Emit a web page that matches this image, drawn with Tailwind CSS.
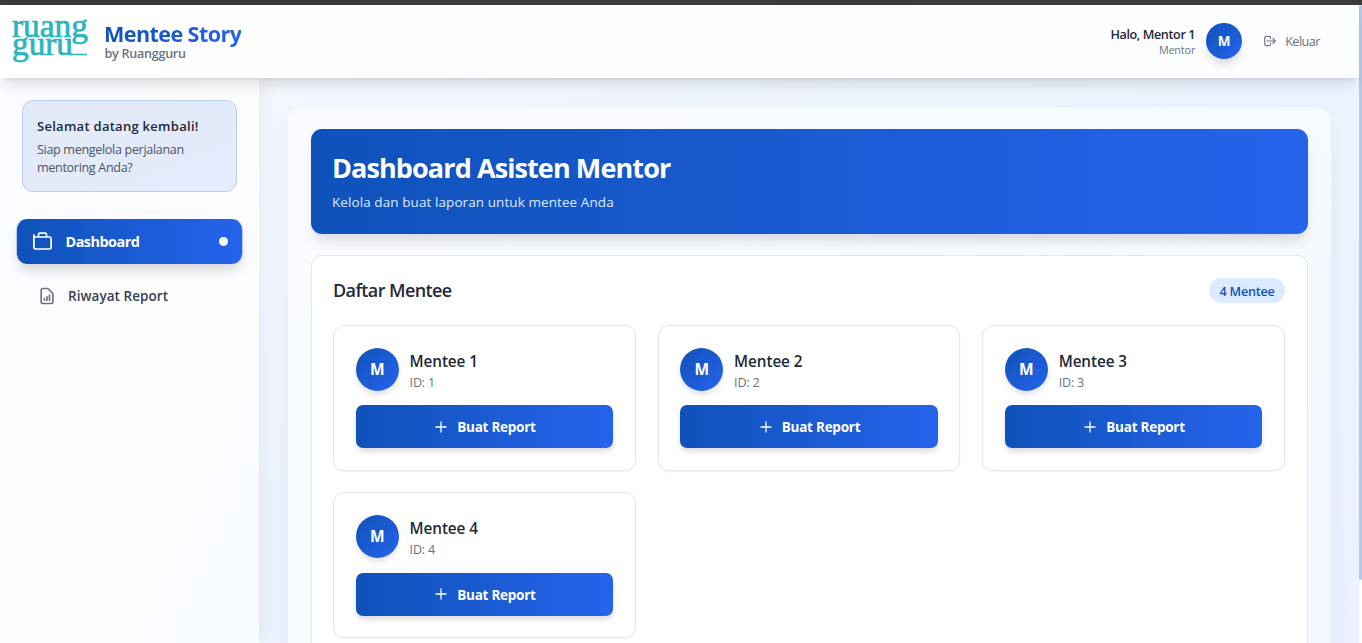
<!DOCTYPE html>
<html lang="id">
<head>
<meta charset="utf-8">
<title>Mentee Story</title>
<script src="https://cdn.jsdelivr.net/npm/@tailwindcss/browser@4"></script>
</head>
<body class="h-[643px] w-[1362px] overflow-hidden bg-white font-['Open_Sans','Noto_Sans',sans-serif] text-[#1f2937] whitespace-nowrap">
<div class="flex h-[643px] flex-col overflow-hidden">
  <div class="h-[5px] shrink-0 bg-[#3b3b3b]"></div>
  <div class="flex h-[638px]">
    <div class="flex w-[1359px] flex-col bg-linear-to-br from-[#f8fafc] via-[#edf4ff] to-[#edf1ff]">
      <header class="relative z-10 flex h-[73px] shrink-0 items-center justify-between bg-linear-to-r from-white to-[#fcfdff] pr-[39px] pl-[10px] shadow-[0_9px_14px_-3px_rgba(0,0,0,0.13),0_3px_5px_-4px_rgba(0,0,0,0.15)]">
        <div class="flex items-center">
          <svg class="h-[60px] w-[80px] overflow-visible" viewBox="0 0 80 60" font-family="Liberation Serif" font-size="33" fill="#2ab5bd" stroke="#2ab5bd" stroke-width=".7">
            <text x="2" y="24.700" textLength="76" lengthAdjust="spacingAndGlyphs">ruang</text>
            <text x="2" y="42.500" textLength="61" lengthAdjust="spacingAndGlyphs">guru</text>
            <path d="M61 42.500H77" stroke-width="1.500"/>
          </svg>
          <div class="mb-px ml-[15px] flex flex-col">
            <span class="-ml-[1px] self-start bg-linear-to-r from-[#0f52ba] to-[#2563eb] bg-clip-text pb-[3px] text-[21.6px] leading-[25px] font-bold tracking-[-0.6px] text-transparent">Mentee Story</span>
            <span class="-mt-[2px] -ml-[0.500px] text-[12.6px] leading-[14px] font-semibold tracking-[-0.28px] text-[#6b7280]">by Ruangguru</span>
          </div>
        </div>
        <div class="flex items-center pb-px">
          <div class="flex flex-col items-end">
            <span class="pt-[2px] text-[12.6px] leading-[16px] font-semibold tracking-[-0.38px]">Halo, Mentor 1</span>
            <span class="-mt-px text-[10.8px] leading-[15px] tracking-[-0.15px] text-[#6b7280]">Mentor</span>
          </div>
          <div class="ml-[11px] flex size-9 items-center justify-center rounded-full bg-linear-to-br from-[#0f52ba] to-[#2563eb] text-[13.500px] font-bold text-white shadow-[0_7px_10px_-2px_rgba(0,0,0,0.15)]">M</div>
          <svg class="ml-[21px] size-[14px]" viewBox="0 0 24 24" fill="none" stroke="#6b7280" stroke-width="2" stroke-linecap="round" stroke-linejoin="round"><path d="M17 16l4-4m0 0l-4-4m4 4H7m6 4v1a3 3 0 01-3 3H6a3 3 0 01-3-3V7a3 3 0 013-3h4a3 3 0 013 3v1"/></svg>
          <span class="ml-[8px] pt-[2px] text-[12.6px] tracking-[-0.5px] text-[#6b7280]">Keluar</span>
        </div>
      </header>
      <div class="flex min-h-0 flex-1">
        <aside class="flex w-[259px] shrink-0 flex-col bg-linear-to-br from-[#fafcff] via-[#fdfdff] to-[#f8fcff] pt-[22px] shadow-[4px_0_18px_rgba(30,50,90,0.06)]">
          <div class="ml-[22px] flex h-[92px] w-[215px] flex-col rounded-[11px] border border-[#b7cbee] bg-linear-to-br from-[#e2e9f6] to-[#e4edfe] px-[14px] pt-[15px]">
            <span class="text-[13px] leading-[20px] font-semibold tracking-[0.28px]">Selamat datang kembali!</span>
            <span class="mt-[5px] text-[12.6px] leading-[18px] tracking-[-0.34px] text-[#4b5563]">Siap mengelola perjalanan<br>mentoring Anda?</span>
          </div>
          <div class="mt-[27px] ml-[16px] flex h-[45px] w-[227px] items-center rounded-[11px] border-x border-[#b7cbee] bg-linear-to-r from-[#0f52ba] to-[#2563eb] bg-origin-border pr-[14px] pl-[15px] shadow-[0_9px_13px_-3px_rgba(0,0,0,0.16)]">
            <svg class="h-[19px] w-[21px]" viewBox="0 0 21 19" fill="none" stroke="white" stroke-width="1.700" stroke-linejoin="round" stroke-linecap="round"><path d="M1.900 2.900V15.500a1.500 1.500 0 001.500 1.500H17.600a1.500 1.500 0 001.500-1.500V6.500a1.500 1.500 0 00-1.500-1.500H3.400a1.500 1.500 0 01-1.500-1.500M6.500 4.800V2.600a1.500 1.500 0 011.500-1.500h5a1.500 1.500 0 011.500 1.500V4.800"/></svg>
            <span class="ml-[12.500px] text-[14.4px] font-bold tracking-[-0.5px] text-white">Dashboard</span>
            <span class="ml-auto size-[9px] rounded-full bg-white"></span>
          </div>
          <div class="mt-[10px] ml-[37px] flex h-[44px] items-center">
            <svg class="size-[20px]" viewBox="0 0 24 24" fill="none" stroke="#6b7280" stroke-width="2" stroke-linecap="round" stroke-linejoin="round"><path d="M9 17v-2m3 2v-4m3 4v-6m2 10H7a2 2 0 01-2-2V5a2 2 0 012-2h5.586a1 1 0 01.707.293l5.414 5.414a1 1 0 01.293.707V19a2 2 0 01-2 2z"/></svg>
            <span class="ml-[11px] pt-px text-[13.500px] font-semibold tracking-[0.05px] text-[#374151]">Riwayat Report</span>
          </div>
        </aside>
        <main class="flex flex-1 flex-col pt-[29px] pr-[29.500px] pl-[29px]">
          <div class="flex flex-1 flex-col rounded-t-[14px] bg-linear-to-br from-[#fafbff] via-[#f7fbff] to-[#f4f7ff] px-[23px] pt-[22px] shadow-[0_8px_22px_rgba(30,60,120,0.06)]">
            <section class="flex h-[105px] w-[997px] shrink-0 flex-col rounded-[11px] bg-linear-to-r from-[#0f52ba] to-[#2563eb] pt-[21px] pl-[21px] shadow-[0_9px_13px_-3px_rgba(0,0,0,0.14)]">
              <h1 class="text-[27px] leading-[36px] font-bold tracking-[-0.9px] text-white">Dashboard Asisten Mentor</h1>
              <p class="mt-[5px] text-[13.500px] leading-[22px] tracking-[0.08px] text-[#dbeafe]">Kelola dan buat laporan untuk mentee Anda</p>
            </section>
            <section class="mt-[21px] flex h-[388px] w-[997px] shrink-0 flex-col rounded-t-[11px] border border-b-0 border-[#e5e7eb] bg-white pt-[21px] pr-[22px] pl-[21px]">
              <div class="flex h-[27px] items-center justify-between">
                <h2 class="text-[18px] leading-[27px] font-semibold tracking-[-0.6px]">Daftar Mentee</h2>
                <span class="flex h-[25px] w-[76px] items-center justify-center rounded-full bg-[#dbeafe] pt-[3px] text-[12.6px] font-semibold tracking-[-0.25px] text-[#0f52ba]">4 Mentee</span>
              </div>
              <div id="grid" class="mt-[21px] grid grid-cols-3 gap-x-[21.600px] gap-y-[21.400px]"></div>
            </section>
          </div>
        </main>
      </div>
    </div>
    <div class="w-[3px] bg-white"><div class="h-[575px] rounded-[3px] bg-[#b4c9ea]"></div></div>
  </div>
</div>
<template id="card">
  <article class="flex h-[146px] flex-col rounded-[11px] border border-[#e5e7eb] bg-white px-[21.600px] pt-[21.300px] shadow-[0_1px_2px_rgba(0,0,0,0.05)]">
    <div class="flex h-[44px] items-center">
      <div class="flex size-[43.200px] items-center justify-center rounded-full bg-linear-to-br from-[#0f52ba] to-[#2563eb] text-[15.500px] font-bold text-white shadow-[0_4px_6px_-1px_rgba(0,0,0,0.14)]">M</div>
      <div class="ml-[10.800px] flex flex-col pt-[4px]">
        <h3 class="text-[15.300px] leading-[22px] font-semibold tracking-[-0.1px]" data-name></h3>
        <p class="text-[12.6px] leading-[21px] tracking-[-0.2px] text-[#6b7280]" data-id></p>
      </div>
    </div>
    <div class="mt-[14px] flex h-[43px] shrink-0 items-center justify-center rounded-[7px] bg-linear-to-r from-[#0f52ba] to-[#2563eb] text-white shadow-[0_4px_6px_-1px_rgba(0,0,0,0.16)]">
      <svg class="ml-px size-[14px]" viewBox="0 0 14 14" stroke="white" stroke-width="1.300" stroke-linecap="round"><path d="M7 2V12M2 7H12"/></svg>
      <span class="ml-[9px] pt-px text-[13.500px] font-bold tracking-[-0.25px]">Buat Report</span>
    </div>
  </article>
</template>
<script>
for (let i = 1; i <= 4; i++) {
  const c = document.getElementById('card').content.cloneNode(true);
  c.querySelector('[data-name]').textContent = 'Mentee ' + i;
  c.querySelector('[data-id]').textContent = 'ID: ' + i;
  document.getElementById('grid').appendChild(c);
}
</script>
</body>
</html>
